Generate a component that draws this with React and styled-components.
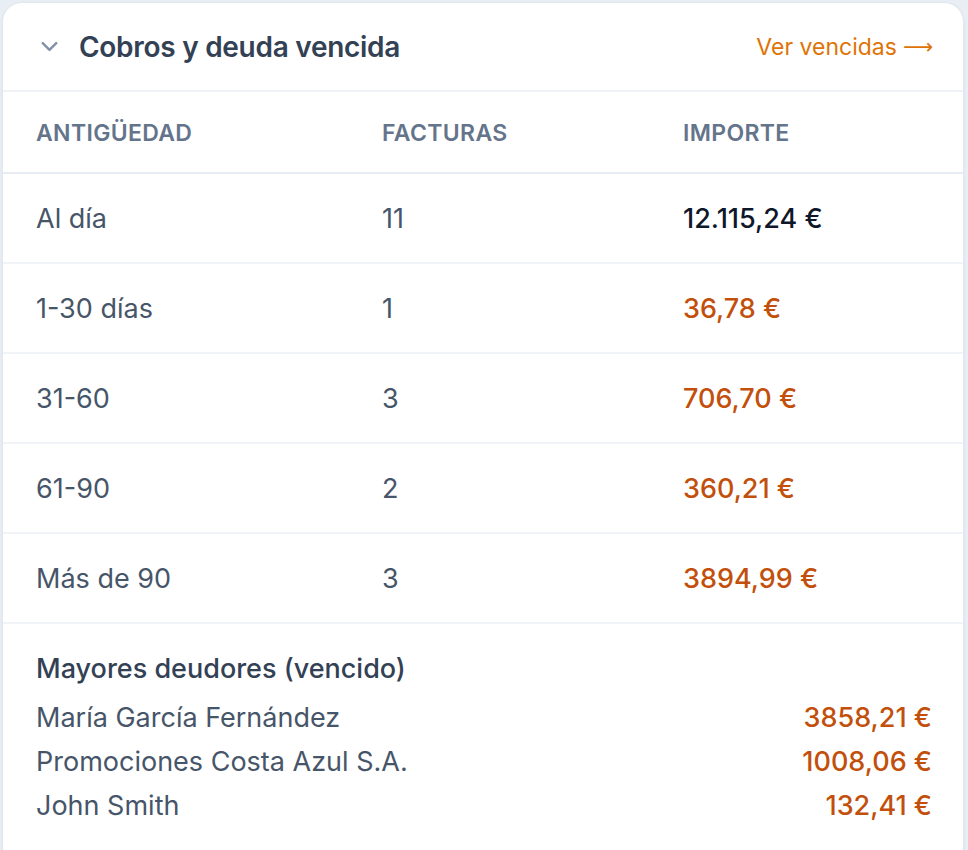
import React from "react"
import styled, { createGlobalStyle } from "styled-components"
import { ChevronDown } from "lucide-react"

const GlobalStyle = createGlobalStyle`
  html, body {
    margin: 0;
    padding: 0;
    background: #e9eef4;
  }
  body {
    padding: 2px 4px 0 2px;
    font-family: Inter, "Noto Sans", "Liberation Sans", sans-serif;
    -webkit-font-smoothing: antialiased;
  }
`

const Card = styled.section`
  background: #ffffff;
  border: 1px solid #e2e8f0;
  border-radius: 20px;
  box-shadow: 0 1px 3px rgba(15, 23, 42, 0.06);
  overflow: hidden;
`

const Header = styled.header`
  display: flex;
  align-items: center;
  justify-content: space-between;
  height: 87px;
  padding: 0 30px 0 33px;
  border-bottom: 2px solid #eef2f6;
`

const TitleGroup = styled.div`
  display: flex;
  align-items: center;
  gap: 16px;
`

const Title = styled.h2`
  margin: 0;
  font-size: 28px;
  font-weight: 600;
  color: #334155;
  letter-spacing: -0.01em;
`

const LinkButton = styled.a`
  display: flex;
  align-items: center;
  gap: 6px;
  font-size: 23px;
  color: #de7406;
  text-decoration: none;
  cursor: pointer;
`

const Arrow = styled.span`
  font-family: "DejaVu Sans", sans-serif;
  font-size: 21px;
`

const Row = styled.div`
  display: grid;
  grid-template-columns: 346px 301px 1fr;
  align-items: center;
  height: ${(p) => (p.$head ? "79px" : "87px")};
  padding: 1px 33px 0;
  border-bottom: 2px solid ${(p) => (p.$head ? "#e7ecf3" : "#f0f3f7")};
`

const HeadCell = styled.div`
  font-size: 23px;
  font-weight: 600;
  color: #64748b;
  text-transform: uppercase;
  letter-spacing: 0.015em;
`

const Cell = styled.div`
  font-size: 27px;
  color: #475569;
`

const Amount = styled.div`
  font-size: 27px;
  font-weight: 500;
  color: ${(p) => (p.$overdue ? "#c2500c" : "#0f172a")};
`

const Debtors = styled.div`
  padding: 29px 31px 40px 33px;
`

const DebtorsTitle = styled.h3`
  margin: 0 0 10px;
  font-size: 27px;
  font-weight: 500;
  color: #334155;
  line-height: 32px;
`

const DebtorRow = styled.div`
  display: flex;
  justify-content: space-between;
  align-items: center;
  height: 44px;
  font-size: 27px;
`

const DebtorName = styled.span`
  color: #475569;
`

const DebtorAmount = styled.span`
  color: #c2500c;
  font-weight: 500;
`

const aging = [
  { label: "Al día", count: 11, amount: "12.115,24 €", overdue: false },
  { label: "1-30 días", count: 1, amount: "36,78 €", overdue: true },
  { label: "31-60", count: 3, amount: "706,70 €", overdue: true },
  { label: "61-90", count: 2, amount: "360,21 €", overdue: true },
  { label: "Más de 90", count: 3, amount: "3894,99 €", overdue: true },
]

const debtors = [
  { name: "María García Fernández", amount: "3858,21 €" },
  { name: "Promociones Costa Azul S.A.", amount: "1008,06 €" },
  { name: "John Smith", amount: "132,41 €" },
]

const App = () => {
  return (
    <>
      <GlobalStyle />
      <Card>
        <Header>
          <TitleGroup>
            <ChevronDown size={27} color="#8392ab" strokeWidth={2.2} />
            <Title>Cobros y deuda vencida</Title>
          </TitleGroup>
          <LinkButton>
            Ver vencidas <Arrow>⟶</Arrow>
          </LinkButton>
        </Header>

        <Row $head>
          <HeadCell>Antigüedad</HeadCell>
          <HeadCell>Facturas</HeadCell>
          <HeadCell>Importe</HeadCell>
        </Row>
        {aging.map((r) => (
          <Row key={r.label}>
            <Cell>{r.label}</Cell>
            <Cell>{r.count}</Cell>
            <Amount $overdue={r.overdue}>{r.amount}</Amount>
          </Row>
        ))}

        <Debtors>
          <DebtorsTitle>Mayores deudores (vencido)</DebtorsTitle>
          {debtors.map((d) => (
            <DebtorRow key={d.name}>
              <DebtorName>{d.name}</DebtorName>
              <DebtorAmount>{d.amount}</DebtorAmount>
            </DebtorRow>
          ))}
        </Debtors>
      </Card>
    </>
  )
}

export default App
